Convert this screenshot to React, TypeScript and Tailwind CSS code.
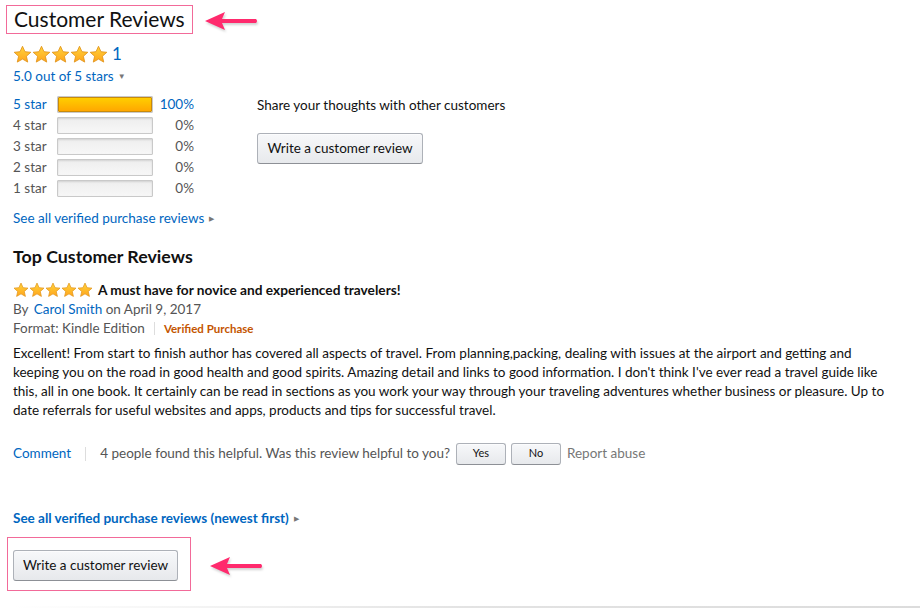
import React from 'react';

const Star = ({ size = 19 }: { size?: number }) => (
  <svg width={size} height={size} viewBox="0 0 24 24">
    <defs>
      <linearGradient id="starFill" x1="0" y1="0" x2="0" y2="1">
        <stop offset="0%" stopColor="#ffd43b" />
        <stop offset="100%" stopColor="#ffa41c" />
      </linearGradient>
    </defs>
    <path
      d="M12 1.6l3.1 6.9 7.4.7-5.6 5 1.7 7.4L12 17.8l-6.6 3.8 1.7-7.4-5.6-5 7.4-.7z"
      fill="url(#starFill)"
      stroke="#e1941a"
      strokeWidth="1.1"
      strokeLinejoin="round"
    />
  </svg>
);

const Stars = ({ size }: { size: number }) => (
  <div className="flex">
    {[0, 1, 2, 3, 4].map((i) => (
      <Star key={i} size={size} />
    ))}
  </div>
);

const Arrow = () => (
  <svg width="56" height="24" viewBox="0 0 56 24" className="drop-shadow-[1px_2px_1px_rgba(0,0,0,0.18)]">
    <path d="M2 12 L22 3 L19 10 L53 10 Q55 12 53 14 L19 14 L22 21 Z" fill="#ff2a6d" />
  </svg>
);

const Button = ({ children, className = '' }: { children: React.ReactNode; className?: string }) => (
  <button
    className={`rounded-[3px] border border-[#adb1b8] border-b-[#8d9096] bg-gradient-to-b from-[#f7f8fa] to-[#e7e9ec] text-[#111] shadow-[inset_0_1px_0_rgba(255,255,255,0.6)] ${className}`}
  >
    {children}
  </button>
);

const rows = [
  { label: '5 star', pct: 100 },
  { label: '4 star', pct: 0 },
  { label: '3 star', pct: 0 },
  { label: '2 star', pct: 0 },
  { label: '1 star', pct: 0 },
];

export default function App() {
  return (
    <div className="relative h-[614px] w-[920px] overflow-hidden bg-white font-['Lato',sans-serif] text-[13.5px] text-[#111]">
      <div className="flex flex-col pl-[13px] pt-[5px]">
        {/* heading */}
        <div className="flex items-center">
          <div className="-ml-[7px] border border-[#f26a99] px-[7px] pb-[3px] pt-[1px] text-[21px] leading-[23px]">
            Customer Reviews
          </div>
          <div className="ml-[10px] mt-[2px]">
            <Arrow />
          </div>
        </div>

        <div className="mt-[10px] flex items-center gap-[4px]">
          <Stars size={19} />
          <span className="text-[17px] leading-[20px] text-[#0066c0]">1</span>
        </div>
        <div className="mt-[3px] flex items-center gap-[4px] leading-[18px] text-[#0066c0]">
          5.0 out of 5 stars
          <span className="text-[8px] text-[#777]">▼</span>
        </div>

        {/* histogram + share */}
        <div className="mt-[11px] flex">
          <div className="flex w-[244px] flex-col gap-[5px]">
            {rows.map((r) => (
              <div key={r.label} className="flex h-[16px] items-center">
                <span className={`w-[44px] ${r.pct ? 'text-[#0066c0]' : 'text-[#555]'}`}>{r.label}</span>
                <div className="h-[17px] w-[96px] rounded-[1px] border border-[#c9c9c9] bg-gradient-to-b from-[#eeeeee] to-[#f7f7f7] shadow-[inset_0_1px_2px_rgba(0,0,0,0.12)]">
                  {r.pct > 0 && (
                    <div className="h-full w-full rounded-[1px] border border-[#c88a0a] bg-gradient-to-b from-[#ffce00] to-[#ffa700]" />
                  )}
                </div>
                <span className={`w-[41px] text-right ${r.pct ? 'text-[#0066c0]' : 'text-[#555]'}`}>{r.pct}%</span>
              </div>
            ))}
          </div>
          <div className="flex flex-col items-start pt-[1px]">
            <div className="leading-[16px]">Share your thoughts with other customers</div>
            <Button className="mt-[20px] h-[31px] w-[166px]">Write a customer review</Button>
          </div>
        </div>

        <div className="mt-[13px] flex items-center gap-[5px] leading-[18px] text-[#0066c0]">
          See all verified purchase reviews
          <span className="text-[7px] text-[#777]">▶</span>
        </div>

        {/* top reviews */}
        <h2 className="mt-[19px] text-[17.8px] font-bold leading-[20px]">Top Customer Reviews</h2>

        <div className="mt-[14px] flex items-center gap-[5px]">
          <Stars size={16} />
          <span className="text-[13.7px] font-bold">A must have for novice and experienced travelers!</span>
        </div>
        <div className="-mt-[1px] leading-[19px] text-[#555]">
          By <span className="ml-[2px] text-[#0066c0]">Carol Smith</span> on April 9, 2017
        </div>
        <div className="flex items-center leading-[19px] text-[#555]">
          Format: Kindle Edition
          <span className="mx-[9px] h-[13px] w-px bg-[#ddd]" />
          <span className="text-[11.5px] font-bold text-[#c45500]">Verified Purchase</span>
        </div>

        <p className="mt-[6px] w-[880px] leading-[19px]">
          Excellent! From start to finish author has covered all aspects of travel. From planning,packing, dealing with
          issues at the airport and getting and keeping you on the road in good health and good spirits. Amazing detail
          and links to good information. I don't think I've ever read a travel guide like this, all in one book. It
          certainly can be read in sections as you work your way through your traveling adventures whether business or
          pleasure. Up to date referrals for useful websites and apps, products and tips for successful travel.
        </p>

        <div className="mt-[23px] flex items-center">
          <span className="text-[#0066c0]">Comment</span>
          <span className="mx-[14px] h-[14px] w-px bg-[#ddd]" />
          <span className="text-[#555]">4 people found this helpful. Was this review helpful to you?</span>
          <Button className="ml-[6px] h-[22px] w-[50px] text-[11px]">Yes</Button>
          <Button className="ml-[5px] h-[22px] w-[50px] text-[11px]">No</Button>
          <span className="ml-[6px] text-[#777]">Report abuse</span>
        </div>

        <div className="mt-[44px] flex items-center gap-[5px] font-bold leading-[18px] text-[#0066c0]">
          See all verified purchase reviews (newest first)
          <span className="text-[7px] font-normal text-[#777]">▶</span>
        </div>

        <div className="mt-[10px] flex items-center">
          <div className="-ml-[6px] border border-[#f26a99] pb-[9px] pl-[5px] pr-[12px] pt-[12px]">
            <Button className="h-[31px] w-[165px]">Write a customer review</Button>
          </div>
          <div className="ml-[17px] mt-[4px]">
            <Arrow />
          </div>
        </div>
      </div>

      <div className="absolute bottom-[6px] left-[14px] right-0 h-[2px] bg-gradient-to-r from-transparent via-[#e3e3e3] to-[#dcdcdc]" />
    </div>
  );
}
